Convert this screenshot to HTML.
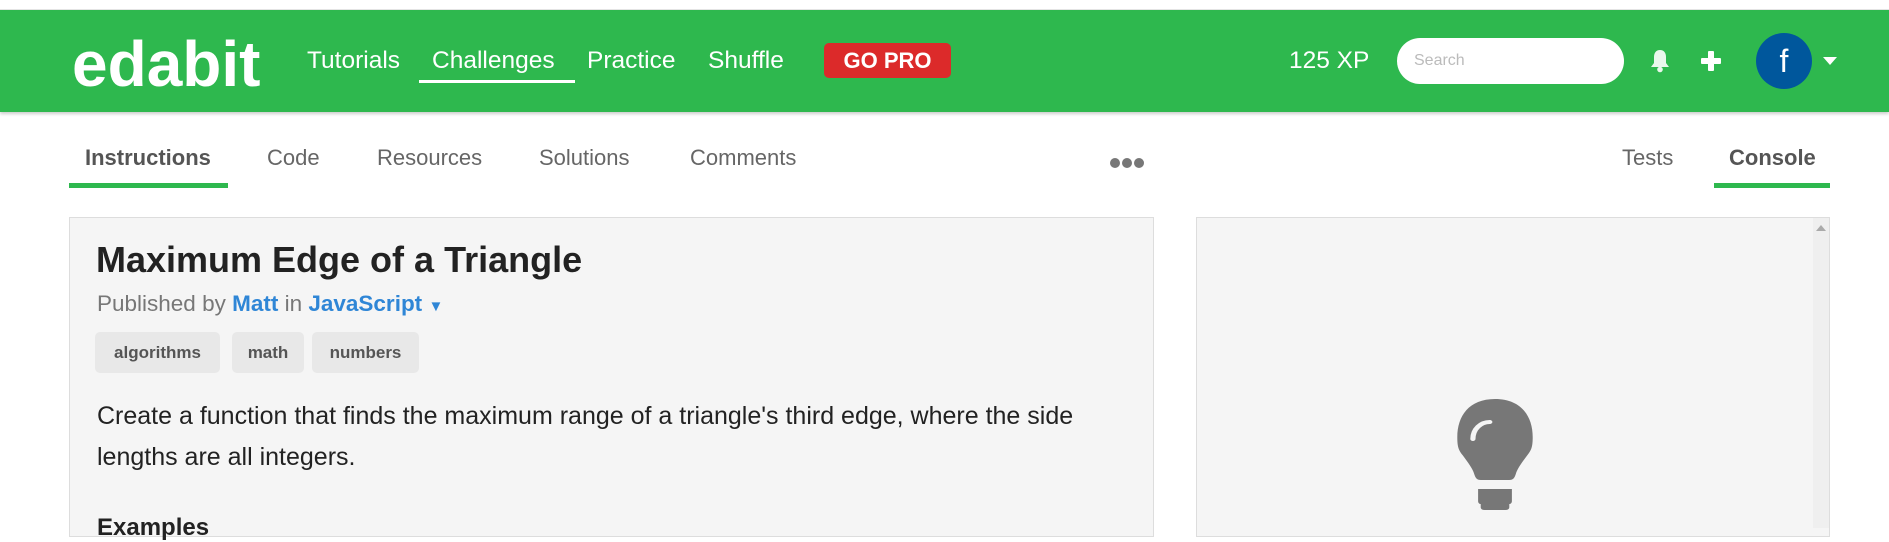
<!DOCTYPE html>
<html><head><style>
*{box-sizing:border-box;margin:0;padding:0}
body{width:1889px;height:522px;overflow:hidden;background:#fff;font-family:"Liberation Sans",sans-serif;position:relative}
.a{position:absolute;white-space:nowrap}
.hdr{position:absolute;left:0;top:10px;width:1889px;height:102px;background:#2eb84e;box-shadow:0 2px 3px rgba(0,0,0,.2)}
.nav{font-size:24.5px;color:#fff;top:47px}
.tab{font-size:22px;color:#666;top:145px}
.tag{position:absolute;top:332px;height:41px;background:#e8e8e8;border-radius:5px;font-size:17px;font-weight:bold;color:#555;line-height:41px;text-align:center}
</style></head><body>
<div class="a" style="top:0;left:0;width:1889px;height:10px;background:#fff;border-bottom:1px solid #e6e6e6"></div>
<div class="hdr"></div>
<div class="a" style="left:72px;top:27px;font-size:64px;font-weight:bold;color:#fff;letter-spacing:0px">edabit</div>
<div class="a nav" style="left:307px">Tutorials</div>
<div class="a nav" style="left:432px">Challenges</div>
<div class="a" style="left:419px;top:80px;width:156px;height:3px;background:#fff"></div>
<div class="a nav" style="left:587px">Practice</div>
<div class="a nav" style="left:708px">Shuffle</div>
<div class="a" style="left:824px;top:43px;width:127px;height:35px;background:#dc2a2a;border-radius:5px;color:#fff;font-size:22px;font-weight:bold;text-align:center;line-height:35px">GO PRO</div>
<div class="a nav" style="left:1289px">125 XP</div>
<div class="a" style="left:1397px;top:38px;width:227px;height:46px;background:#fff;border-radius:23px;color:#bbb;font-size:16px;line-height:46px;padding-left:17px">Search</div>
<svg class="a" style="left:1649px;top:48px" width="22" height="26" viewBox="0 0 22 26"><path d="M11 2c-4 0-6 3-6 7v6l-3 4h18l-3-4V9c0-4-2-7-6-7z" fill="#eaf7ec"/><circle cx="11" cy="21.5" r="2.8" fill="#eaf7ec"/></svg>
<div class="a" style="left:1701px;top:58px;width:20px;height:6px;background:#fff;border-radius:1px"></div>
<div class="a" style="left:1708px;top:51px;width:6px;height:20px;background:#fff;border-radius:1px"></div>
<div class="a" style="left:1756px;top:33px;width:56px;height:56px;border-radius:50%;background:#00579c;color:#fff;font-size:32px;text-align:center;line-height:56px">f</div>
<div class="a" style="left:1823px;top:57px;width:0;height:0;border-left:7px solid transparent;border-right:7px solid transparent;border-top:8px solid #fff"></div>
<div class="a tab" style="left:85px;font-weight:bold;color:#555">Instructions</div>
<div class="a" style="left:69px;top:183px;width:159px;height:5px;background:#2eb84e"></div>
<div class="a tab" style="left:267px">Code</div>
<div class="a tab" style="left:377px">Resources</div>
<div class="a tab" style="left:539px">Solutions</div>
<div class="a tab" style="left:690px">Comments</div>
<div class="a" style="left:1110px;top:158px;width:10px;height:10px;border-radius:50%;background:#777"></div>
<div class="a" style="left:1122px;top:158px;width:10px;height:10px;border-radius:50%;background:#777"></div>
<div class="a" style="left:1134px;top:158px;width:10px;height:10px;border-radius:50%;background:#777"></div>
<div class="a tab" style="left:1622px">Tests</div>
<div class="a tab" style="left:1729px;font-weight:bold;color:#555">Console</div>
<div class="a" style="left:1714px;top:183px;width:116px;height:5px;background:#2eb84e"></div>
<div class="a" style="left:69px;top:217px;width:1085px;height:320px;background:#f5f5f5;border:1px solid #ddd"></div>
<div class="a" style="left:96px;top:239px;font-size:36px;font-weight:bold;color:#222">Maximum Edge of a Triangle</div>
<div class="a" style="left:97px;top:291px;font-size:22.5px;color:#777">Published by <b style="color:#2f86d6">Matt</b> in <b style="color:#2f86d6">JavaScript</b> <span style="color:#2f86d6;font-size:15px">&#9660;</span></div>
<div class="tag" style="left:95px;width:125px">algorithms</div>
<div class="tag" style="left:232px;width:72px">math</div>
<div class="tag" style="left:312px;width:107px">numbers</div>
<div class="a" style="left:97px;top:396px;font-size:25px;color:#222;line-height:41px">Create a function that finds the maximum range of a triangle's third edge, where the side<br>lengths are all integers.</div>
<div class="a" style="left:97px;top:514px;font-size:24px;font-weight:bold;color:#222">Examples</div>
<div class="a" style="left:1196px;top:217px;width:634px;height:320px;background:#f5f5f5;border:1px solid #ddd"></div>
<div class="a" style="left:1813px;top:218px;width:16px;height:310px;background:#efefef"></div>
<div class="a" style="left:1816px;top:225px;width:0;height:0;border-left:5px solid transparent;border-right:5px solid transparent;border-bottom:6px solid #aaa"></div>
<svg class="a" style="left:1443px;top:397px" width="104" height="116" viewBox="0 0 80 116" preserveAspectRatio="none"><path d="M40 2C20 2 11 19 11 40c0 10 1 13 4 18 4 7 8 14 9 19 1 4 2 6 5 6h22c3 0 4-2 5-6 1-5 5-12 9-19 3-5 4-8 4-18C69 19 60 2 40 2z" fill="#777"/><path d="M23 42c0-10 6-17 13-17" stroke="#f5f5f5" stroke-width="4" fill="none" stroke-linecap="round"/><path d="M27 92h26v12c0 2-1 3-2 3v3c0 2-1 3-3 3H32c-2 0-3-1-3-3v-3c-1 0-2-1-2-3z" fill="#777"/></svg>
</body></html>
